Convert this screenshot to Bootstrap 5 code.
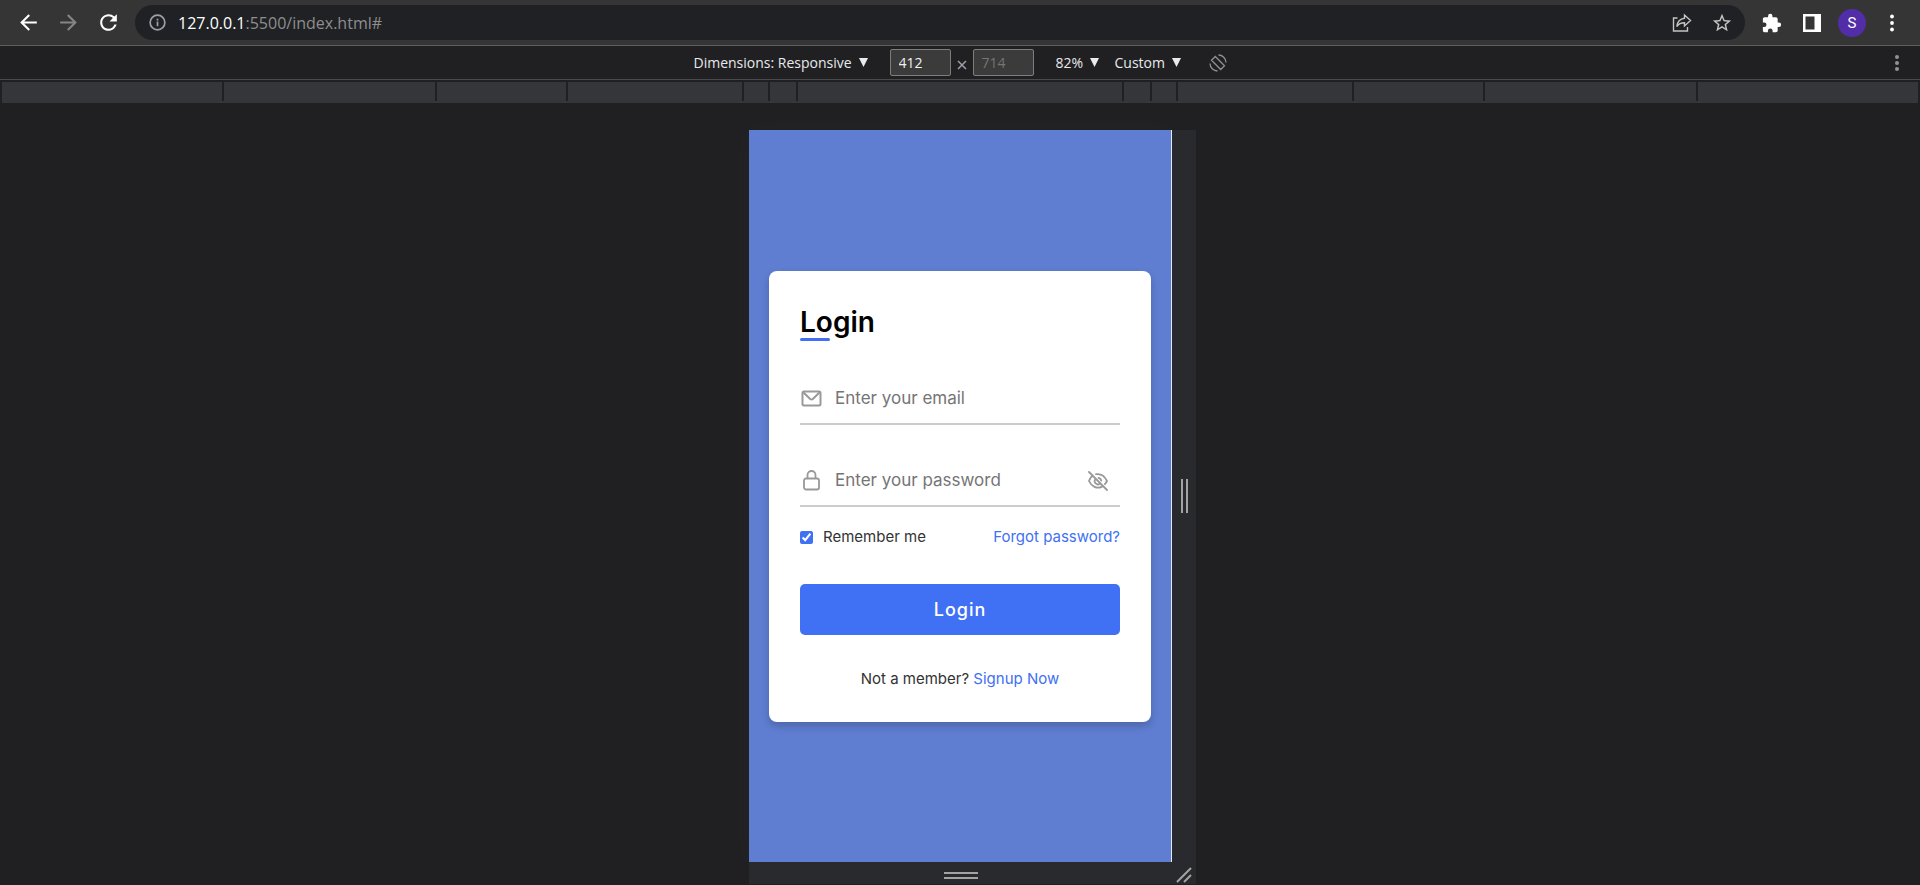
<!DOCTYPE html>
<html lang="en">
<head>
<meta charset="utf-8">
<meta name="viewport" content="width=device-width, initial-scale=1">
<title>Login</title>
<link href="https://cdn.jsdelivr.net/npm/bootstrap@5.3.0/dist/css/bootstrap.min.css" rel="stylesheet">
<style>
  body { background: #202022; color: #e8eaed; font-family: "Open Sans", "Noto Sans", sans-serif; }
  svg { display: block; flex: none; }
  .bare { border: 0; background: none; padding: 0; color: inherit; }

  /* Browser bar */
  .browser-bar { height: 46px; background: #353535; border-bottom: 1px solid #5f5f5f; }
  .tool { width: 40px; height: 40px; display: flex; align-items: center; justify-content: center; color: #fff; }
  .tool.dim { color: #858585; }
  .address { height: 35px; margin: 0 7px; padding: 0 7px 0 14px; background: #202124; font-size: 16px; line-height: 24px; color: #8e8e8e; }
  .address .host { color: #fff; }
  .address .tool { width: 32px; color: #c4c4c4; }
  .avatar { width: 28px; height: 28px; background: #512da8; font: 15px/28px Roboto, sans-serif; }

  /* Device toolbar */
  .device-bar { height: 34px; border-bottom: 1px solid #4a4a4c; font-size: 14px; }
  .picker { display: flex; align-items: center; gap: 6px; }
  .picker select { appearance: none; border: 0; padding: 0; background: none; color: inherit; font-size: 14px; line-height: 20px; }
  .size-group { margin: 0 22px; }
  .size-box { width: 61px; height: 27px; padding: 0 8px; border: 1px solid #7d7d7d; border-radius: 2px; background: #3b3b3b; color: #f1f1f1; font-size: 14px; }
  .size-box::placeholder { color: #757575; opacity: 1; }

  /* Breakpoint ruler */
  .ruler { height: 21px; margin: 2px 2px 0; gap: 2px; border-bottom: 2px solid #35363a; overflow: hidden; }
  .ruler span { background: #35363a; flex: none; }

  /* Emulated device */
  .stage { display: grid; grid-template-columns: 25px 423px 24px; grid-template-rows: 1fr 22px; justify-content: center; padding: 27px 0 1px; }
  .screen { grid-column: 2; background: #5f7ed2; border-right: 1px solid #e4e9f8; padding: 20px; box-shadow: 0 0 30px rgba(255,255,255,.03); font-family: Inter, sans-serif; color: #333; }
  .grip { background: #292a2d; color: #a3a3a3; }
  .grip-bottom { grid-column: 2; }

  /* Login form */
  .login-card { width: 100%; padding: 32px 31px 31px; border-radius: 8px; background: #fff; box-shadow: 0 4px 8px rgba(0,0,0,.2); }
  .login-title { position: relative; margin: 0; height: 40px; font-size: 28px; line-height: 38px; font-weight: 600; color: #000; }
  .login-title::before { content: ""; position: absolute; left: 0; bottom: 2px; width: 30px; height: 3px; border-radius: 3px; background: #4070f4; }
  .field { height: 50px; margin-top: 32px; border-bottom: 2px solid #ccc; color: #999; padding: 0 12px 0 1px; }
  .field input { min-width: 0; border: 0; outline: 0; padding: 0; margin-left: 13px; background: none; font-size: 17px; color: #333; }
  .field input::placeholder { color: #757575; opacity: 1; }
  .row-options { margin-top: 19px; height: 24px; font-size: 15px; }
  .row-options input { width: 13px; height: 13px; margin: 0 10px 0 0; accent-color: #4070f4; }
  .login-card a { color: #4070f4; text-decoration: none; }
  .btn-login { height: 51px; margin-top: 34px; border: 0; border-radius: 5px; background: #4070f4; color: #fff; font-size: 18px; line-height: 39px; font-weight: 500; letter-spacing: 1px; }
  .btn-login:hover { background: #265df2; color: #fff; }
  .signup { margin: 32px 0 0; font-size: 15px; line-height: 24px; }
</style>
</head>
<body class="min-vh-100 d-flex flex-column">

<header class="browser-bar d-flex align-items-center px-2">
  <button class="bare tool" type="button" aria-label="Back"><svg width="25" height="25" viewBox="0 0 24 24" fill="currentColor"><path d="M20 11H7.83l5.59-5.59L12 4l-8 8 8 8 1.41-1.41L7.83 13H20z"/></svg></button>
  <button class="bare tool dim" type="button" aria-label="Forward"><svg width="25" height="25" viewBox="0 0 24 24" fill="currentColor"><path d="M12 4l-1.41 1.41L16.17 11H4v2h12.17l-5.58 5.59L12 20l8-8z"/></svg></button>
  <button class="bare tool" type="button" aria-label="Reload"><svg width="25" height="25" viewBox="0 0 24 24" fill="currentColor"><path d="M17.65 6.35A7.96 7.96 0 0 0 12 4c-4.42 0-7.99 3.58-7.99 8s3.57 8 7.99 8c3.73 0 6.84-2.55 7.73-6h-2.08A5.99 5.99 0 0 1 12 18c-3.31 0-6-2.69-6-6s2.69-6 6-6c1.66 0 3.14.69 4.22 1.78L13 11h7V4z"/></svg></button>
  <div class="address rounded-pill d-flex align-items-center flex-fill">
    <svg class="me-2" width="17" height="17" viewBox="0 0 18 18" fill="none" stroke="#9aa0a6" stroke-width="1.8"><circle cx="9" cy="9" r="7.8"/><path d="M9 8v5M9 5v1.8"/></svg>
    <span class="flex-fill ms-1" role="textbox" aria-label="Address"><span class="host">127.0.0.1</span>:5500/index.html#</span>
    <button class="bare tool" type="button" aria-label="Share"><svg width="20" height="20" viewBox="0 0 20 20" fill="none" stroke="currentColor" stroke-width="1.4"><path d="M5.500 5H1.500v13h14v-4M12.500 2l6 5.500-6 5.500V9.800C9 9.800 6.500 11 4.800 13.500 5.300 9 8 5.800 12.500 5.200z"/></svg></button>
    <button class="bare tool ms-2" type="button" aria-label="Bookmark"><svg width="22" height="22" viewBox="0 0 24 24" fill="currentColor"><path d="M22 9.240l-7.190-.62L12 2 9.190 8.630 2 9.240l5.460 4.730L5.820 21 12 17.270 18.180 21l-1.630-7.030zM12 15.400l-3.760 2.270 1-4.280-3.320-2.880 4.380-.38L12 6.100l1.710 4.040 4.380.38-3.320 2.880 1 4.280z"/></svg></button>
  </div>
  <button class="bare tool" type="button" aria-label="Extensions"><svg width="20" height="20" viewBox="1 0 23 23" fill="currentColor"><path d="M20.500 11H19V7c0-1.100-.9-2-2-2h-4V3.500a2.500 2.500 0 0 0-5 0V5H4c-1.100 0-2 .9-2 2v3.800h1.500a2.700 2.700 0 0 1 0 5.400H2V20c0 1.100.9 2 2 2h3.800v-1.500a2.700 2.700 0 0 1 5.400 0V22H17c1.100 0 2-.9 2-2v-4h1.500a2.500 2.500 0 0 0 0-5z"/></svg></button>
  <button class="bare tool" type="button" aria-label="Side panel"><svg width="18" height="18" viewBox="0 0 18 18" fill="currentColor" fill-rule="evenodd"><path d="M0 0h18v18H0zM2.500 2.500v13h9v-13z"/></svg></button>
  <button class="bare tool" type="button" aria-label="Profile"><span class="avatar rounded-circle">S</span></button>
  <button class="bare tool" type="button" aria-label="Menu"><svg width="4" height="18" viewBox="0 0 4 18" fill="currentColor"><circle cx="2" cy="2.500" r="1.900"/><circle cx="2" cy="9" r="1.900"/><circle cx="2" cy="15.500" r="1.900"/></svg></button>
</header>

<div class="device-bar d-flex align-items-center">
  <div class="flex-fill w-25"></div>
  <div class="d-flex align-items-center">
    <label class="picker"><select aria-label="Dimensions"><option>Dimensions: Responsive</option></select><svg width="9" height="9" viewBox="0 0 9 9" fill="currentColor"><path d="M0 0h9L4.500 9z"/></svg></label>
    <div class="size-group d-flex align-items-center">
      <input class="size-box" type="text" value="412" aria-label="Width">
      <svg class="mx-1 mt-1" width="14" height="14" viewBox="0 0 14 14" stroke="#9aa0a6" stroke-width="1.500"><path d="M3 3l8 8M11 3l-8 8"/></svg>
      <input class="size-box" type="text" placeholder="714" aria-label="Height">
    </div>
    <label class="picker me-3"><select aria-label="Zoom"><option>82%</option></select><svg width="9" height="9" viewBox="0 0 9 9" fill="currentColor"><path d="M0 0h9L4.500 9z"/></svg></label>
    <label class="picker"><select aria-label="Throttling"><option>Custom</option></select><svg width="9" height="9" viewBox="0 0 9 9" fill="currentColor"><path d="M0 0h9L4.500 9z"/></svg></label>
    <button class="bare ms-4 ps-1" type="button" aria-label="Rotate"><svg width="18" height="18" viewBox="0 0 18 18" fill="none" stroke="#919191" stroke-width="1.300"><path d="M6.300 2.500l9.200 9.200-3.800 3.800L2.500 6.300zM9.500 1C13.500 1 17 4.500 17 8.500M8.500 17C4.500 17 1 13.500 1 9.500"/></svg></button>
  </div>
  <div class="flex-fill w-25 d-flex justify-content-end pe-3"><button class="bare px-1" type="button" aria-label="More options"><svg width="6" height="18" viewBox="0 0 6 18" fill="#929292"><circle cx="3" cy="3" r="2"/><circle cx="3" cy="9" r="2"/><circle cx="3" cy="15" r="2"/></svg></button></div>
</div>

<div class="ruler d-flex justify-content-center">
  <span class="flex-fill"></span><span style="width:211px"></span><span style="width:129px"></span><span style="width:174px"></span><span style="width:24px"></span><span style="width:26px"></span>
  <span style="width:324px"></span>
  <span style="width:26px"></span><span style="width:24px"></span><span style="width:174px"></span><span style="width:129px"></span><span style="width:211px"></span><span class="flex-fill"></span>
</div>

<main class="stage flex-fill">
  <section class="screen d-flex align-items-center">
    <form class="login-card">
      <h1 class="login-title">Login</h1>
      <div class="field d-flex align-items-center">
        <svg width="21" height="17" viewBox="0 0 21 17" fill="none" stroke="currentColor" stroke-width="2" stroke-linejoin="round"><rect x="1.500" y="1.500" width="18" height="14" rx="1.500"/><path d="M2.500 2.500l6.700 6.500q1.300 1 2.600 0l6.700-6.500"/></svg>
        <input class="flex-fill" type="email" placeholder="Enter your email" aria-label="Email">
      </div>
      <div class="field d-flex align-items-center">
        <svg width="21" height="21" viewBox="0 0 21 21" fill="none" stroke="currentColor" stroke-width="1.800"><rect x="3" y="8.500" width="15" height="11" rx="2"/><path d="M6.500 8.500V5a4 4 0 0 1 8 0v3.500"/></svg>
        <input class="flex-fill" type="password" placeholder="Enter your password" aria-label="Password">
        <button class="bare" type="button" aria-label="Show password"><svg width="20" height="20" viewBox="0 0 20 20" fill="none" stroke="currentColor" stroke-width="1.800" stroke-linecap="round"><path d="M1 1l18 18M8 3.200c4.500-.7 8.500 1.600 11 6.800-.6 1.300-1.300 2.300-2.100 3.200M4 5.200C2.800 6.400 1.800 8 1 10c2.500 5.500 7.800 8.300 13 5.600M7.300 8.200a3.300 3.300 0 0 0 4.600 4.600M10.500 6.800a3.300 3.300 0 0 1 2.700 2.700"/></svg></button>
      </div>
      <div class="row-options d-flex align-items-center">
        <input type="checkbox" id="remember" checked>
        <label for="remember">Remember me</label>
        <a class="ms-auto" href="#">Forgot password?</a>
      </div>
      <button class="btn btn-login w-100" type="button">Login</button>
      <p class="signup text-center">Not a member? <a href="#">Signup Now</a></p>
    </form>
  </section>
  <div class="grip d-flex align-items-center justify-content-center"><svg width="7" height="34" viewBox="0 0 7 34" fill="currentColor"><path d="M0 0h2v34H0zM5 0h2v34H5z"/></svg></div>
  <div class="grip grip-bottom d-flex align-items-center justify-content-center"><svg class="mt-1" width="34" height="7" viewBox="0 0 34 7" fill="currentColor"><path d="M0 0h34v2H0zM0 5h34v2H0z"/></svg></div>
  <div class="grip d-flex align-items-center justify-content-center"><svg class="mt-1" width="16" height="16" viewBox="0 0 16 16" stroke="currentColor" stroke-width="2"><path d="M1 15L15 1M8 15l7-7"/></svg></div>
</main>

<script src="https://cdn.jsdelivr.net/npm/bootstrap@5.3.0/dist/js/bootstrap.bundle.min.js"></script>
</body>
</html>
